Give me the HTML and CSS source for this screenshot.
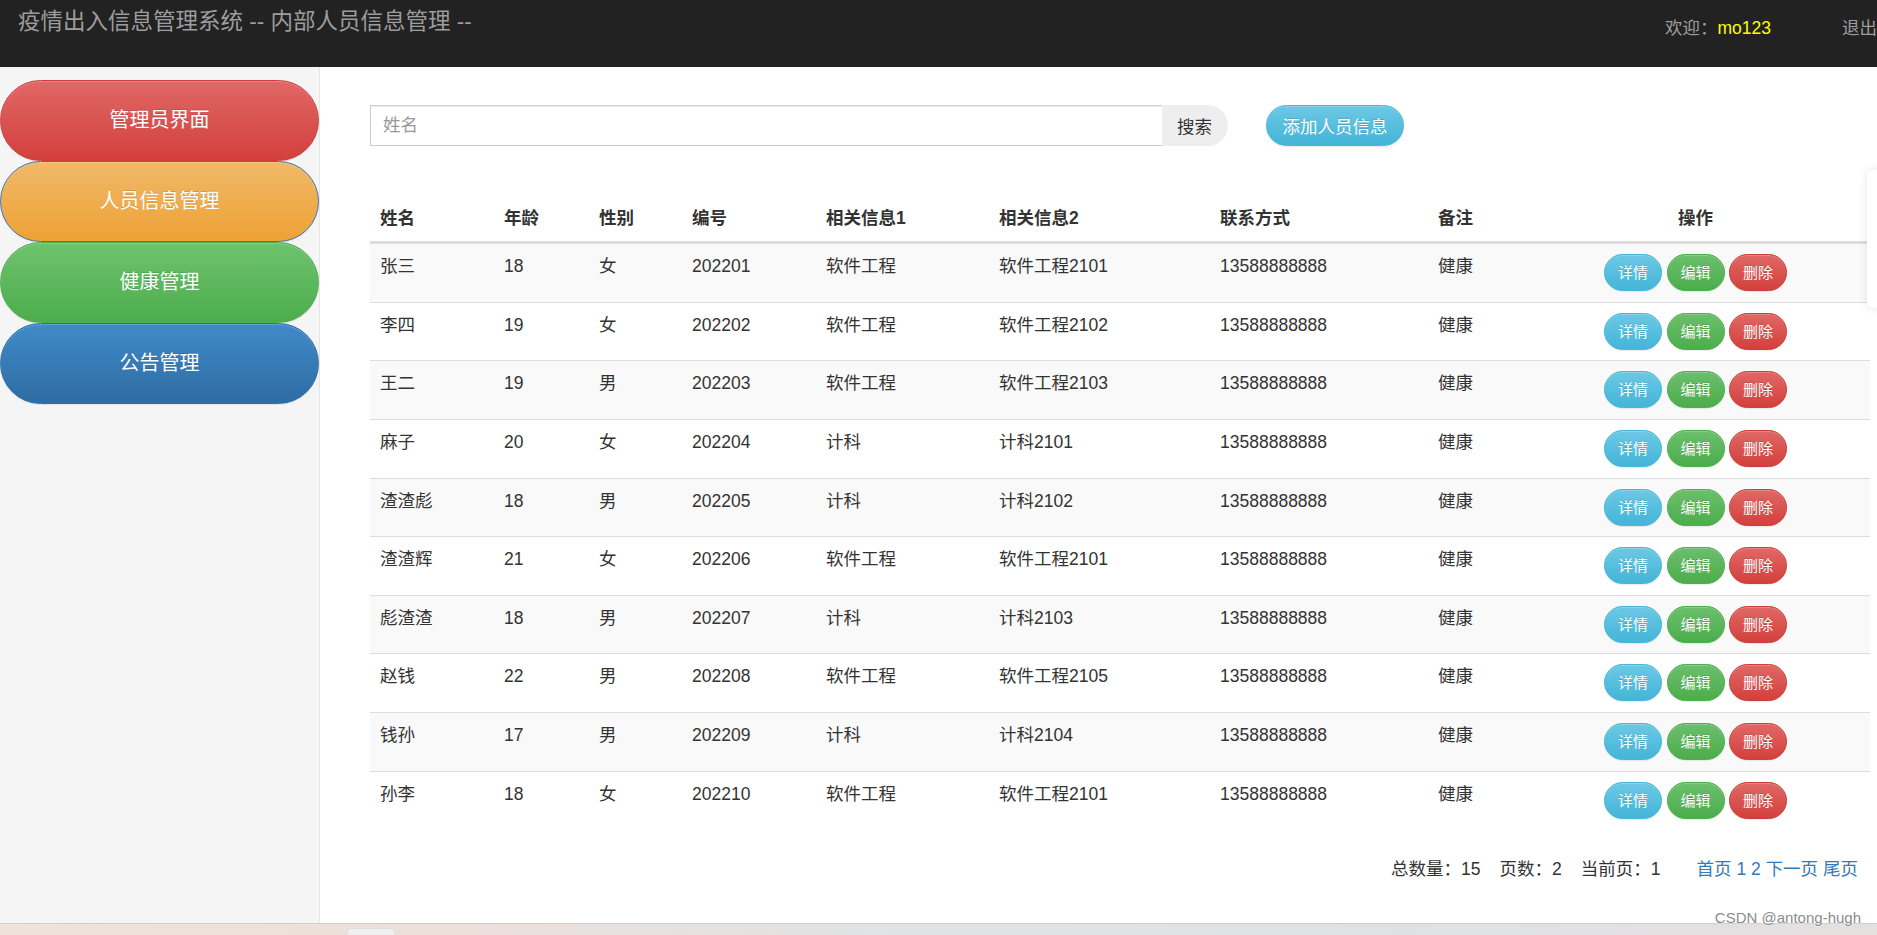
FILE: index.html
```html
<!DOCTYPE html>
<html lang="zh-CN">
<head>
<meta charset="utf-8">
<title>疫情出入信息管理系统</title>
<link rel="stylesheet" href="styles.css">
</head>
<body>
<header class="topbar">
  <div class="brand">疫情出入信息管理系统 -- 内部人员信息管理 --</div>
  <nav class="user-nav">
    <span class="welcome">欢迎：<span class="uname">mo123</span></span>
    <a class="logout">退出</a>
  </nav>
</header>
<div class="layout">
  <aside class="sidebar">
    <a class="side-btn red">管理员界面</a>
    <a class="side-btn orange active">人员信息管理</a>
    <a class="side-btn green">健康管理</a>
    <a class="side-btn blue">公告管理</a>
  </aside>
  <main class="main">
    <div class="toolbar">
      <div class="search-group">
        <input class="search-input" type="text" placeholder="姓名">
        <button class="search-btn">搜索</button>
      </div>
      <button class="add-btn">添加人员信息</button>
    </div>
    <table class="data-table">
      <colgroup>
        <col class="c1"><col class="c2"><col class="c3"><col class="c4"><col class="c5"><col class="c6"><col class="c7"><col class="c8"><col class="c9">
      </colgroup>
      <thead>
        <tr><th>姓名</th><th>年龄</th><th>性别</th><th>编号</th><th>相关信息1</th><th>相关信息2</th><th>联系方式</th><th>备注</th><th class="ops-h">操作</th></tr>
      </thead>
      <tbody>
        <tr><td>张三</td><td>18</td><td>女</td><td>202201</td><td>软件工程</td><td>软件工程2101</td><td>13588888888</td><td>健康</td><td class="ops"><div class="ops-wrap"><a class="sbtn info">详情</a><a class="sbtn success">编辑</a><a class="sbtn danger">删除</a></div></td></tr>
        <tr><td>李四</td><td>19</td><td>女</td><td>202202</td><td>软件工程</td><td>软件工程2102</td><td>13588888888</td><td>健康</td><td class="ops"><div class="ops-wrap"><a class="sbtn info">详情</a><a class="sbtn success">编辑</a><a class="sbtn danger">删除</a></div></td></tr>
        <tr><td>王二</td><td>19</td><td>男</td><td>202203</td><td>软件工程</td><td>软件工程2103</td><td>13588888888</td><td>健康</td><td class="ops"><div class="ops-wrap"><a class="sbtn info">详情</a><a class="sbtn success">编辑</a><a class="sbtn danger">删除</a></div></td></tr>
        <tr><td>麻子</td><td>20</td><td>女</td><td>202204</td><td>计科</td><td>计科2101</td><td>13588888888</td><td>健康</td><td class="ops"><div class="ops-wrap"><a class="sbtn info">详情</a><a class="sbtn success">编辑</a><a class="sbtn danger">删除</a></div></td></tr>
        <tr><td>渣渣彪</td><td>18</td><td>男</td><td>202205</td><td>计科</td><td>计科2102</td><td>13588888888</td><td>健康</td><td class="ops"><div class="ops-wrap"><a class="sbtn info">详情</a><a class="sbtn success">编辑</a><a class="sbtn danger">删除</a></div></td></tr>
        <tr><td>渣渣辉</td><td>21</td><td>女</td><td>202206</td><td>软件工程</td><td>软件工程2101</td><td>13588888888</td><td>健康</td><td class="ops"><div class="ops-wrap"><a class="sbtn info">详情</a><a class="sbtn success">编辑</a><a class="sbtn danger">删除</a></div></td></tr>
        <tr><td>彪渣渣</td><td>18</td><td>男</td><td>202207</td><td>计科</td><td>计科2103</td><td>13588888888</td><td>健康</td><td class="ops"><div class="ops-wrap"><a class="sbtn info">详情</a><a class="sbtn success">编辑</a><a class="sbtn danger">删除</a></div></td></tr>
        <tr><td>赵钱</td><td>22</td><td>男</td><td>202208</td><td>软件工程</td><td>软件工程2105</td><td>13588888888</td><td>健康</td><td class="ops"><div class="ops-wrap"><a class="sbtn info">详情</a><a class="sbtn success">编辑</a><a class="sbtn danger">删除</a></div></td></tr>
        <tr><td>钱孙</td><td>17</td><td>男</td><td>202209</td><td>计科</td><td>计科2104</td><td>13588888888</td><td>健康</td><td class="ops"><div class="ops-wrap"><a class="sbtn info">详情</a><a class="sbtn success">编辑</a><a class="sbtn danger">删除</a></div></td></tr>
        <tr><td>孙李</td><td>18</td><td>女</td><td>202210</td><td>软件工程</td><td>软件工程2101</td><td>13588888888</td><td>健康</td><td class="ops"><div class="ops-wrap"><a class="sbtn info">详情</a><a class="sbtn success">编辑</a><a class="sbtn danger">删除</a></div></td></tr>
      </tbody>
    </table>
    <div class="pager">
      <span class="pinfo">总数量：15</span>
      <span class="pinfo">页数：2</span>
      <span class="pinfo">当前页：1</span>
      <span class="plinks"><a>首页</a> <a>1</a> <a>2</a> <a>下一页</a> <a>尾页</a></span>
    </div>
  </main>
</div>
<div class="taskbar"><div class="tab"></div></div>
<div class="edge-card"></div>
<div class="watermark">CSDN @antong-hugh</div>
</body>
</html>
```

FILE: styles.css
```css
* { box-sizing: border-box; }
html, body { margin: 0; padding: 0; }
body {
  width: 1877px;
  height: 935px;
  overflow: hidden;
  position: relative;
  font-family: "Liberation Sans", Arial, "Noto Sans CJK SC", sans-serif;
  font-size: 17.5px;
  line-height: 25px;
  color: #333;
  background: #fff;
}
a { text-decoration: none; cursor: pointer; }

.topbar {
  height: 67px;
  background: #222;
  display: flex;
  align-items: flex-start;
  overflow: hidden;
}
.brand {
  color: #9d9d9d;
  font-size: 22.5px;
  line-height: 28px;
  padding: 8px 0 0 18px;
}
.user-nav {
  margin-left: auto;
  margin-right: 0;
  display: flex;
  align-items: flex-start;
  padding-top: 16px;
  color: #9d9d9d;
  font-size: 17.5px;
  line-height: 25px;
}
.welcome { color: #9d9d9d; }
.uname { color: #ffff00; }
.logout { color: #9d9d9d; margin-left: 71px; white-space: nowrap; }

.layout {
  display: flex;
  height: 856px;
}
.sidebar {
  width: 320px;
  flex: none;
  background: #f5f5f5;
  border-right: 1px solid #e6e6e6;
  padding-top: 13px;
  display: flex;
  flex-direction: column;
}
.side-btn {
  display: flex;
  align-items: center;
  justify-content: center;
  height: 81px;
  width: 319px;
  border-radius: 41px;
  border: 1px solid;
  color: #fff;
  font-size: 20px;
  text-shadow: 0 -1px 0 rgba(0,0,0,.15);
  box-shadow: inset 0 1px 0 rgba(255,255,255,.2), 0 1px 1px rgba(0,0,0,.08);
}
.side-btn.red { background: linear-gradient(#e06866, #d3403c); border-color: #c9403b; }
.side-btn.orange { background: linear-gradient(#f1b868, #eea236); border-color: #3a76b0; }
.side-btn.green { background: linear-gradient(#6ec36e, #4cad4c); border-color: #4cae4c; }
.side-btn.blue { background: linear-gradient(#408ac9, #2e6ca3); border-color: #2e6da4; }

.main {
  flex: 1;
  padding: 38px 7px 0 50px;
}
.toolbar {
  display: flex;
  align-items: center;
  height: 41px;
  margin-bottom: 50px;
}
.search-group {
  display: flex;
  width: 858px;
  height: 41px;
}
.search-input {
  flex: 1;
  height: 41px;
  border: 1px solid #ccc;
  border-right: none;
  border-radius: 0;
  padding: 0 12px;
  font-family: inherit;
  font-size: 17.5px;
  color: #555;
  box-shadow: inset 0 1px 1px rgba(0,0,0,.075);
  outline: none;
}
.search-input::placeholder { color: #999; }
.search-btn {
  width: 66px;
  height: 41px;
  border: none;
  background: #eeeeee;
  border-radius: 0 21px 21px 0;
  font-family: inherit;
  font-size: 17.5px;
  color: #333;
  text-align: left;
  padding: 0 0 0 15px;
}
.add-btn {
  margin-left: 38px;
  width: 138px;
  height: 41px;
  border: 1px solid #46b8da;
  border-radius: 21px;
  background: linear-gradient(#6cc8e5, #44b5d8);
  color: #fff;
  font-family: inherit;
  font-size: 17.5px;
  text-shadow: 0 -1px 0 rgba(0,0,0,.15);
  box-shadow: inset 0 1px 0 rgba(255,255,255,.2), 0 1px 2px rgba(0,0,0,.1);
  padding: 0;
}

.data-table {
  width: 1500px;
  border-collapse: collapse;
  table-layout: fixed;
}
.c1 { width: 124px; } .c2 { width: 95px; } .c3 { width: 93px; } .c4 { width: 134px; }
.c5 { width: 173px; } .c6 { width: 221px; } .c7 { width: 218px; } .c8 { width: 93px; } .c9 { width: 349px; }
.data-table th {
  text-align: left;
  font-weight: bold;
  padding: 10px;
  line-height: 25px;
  border-bottom: 3px solid #ddd;
  vertical-align: bottom;
}
.data-table th.ops-h { text-align: center; }
.data-table td {
  padding: 10px 10px 10.65px;
  line-height: 25px;
  vertical-align: top;
  border-top: 1px solid #ddd;
}
.data-table tbody tr:first-child td { border-top: none; }
.data-table tbody tr:nth-child(odd) { background: #f9f9f9; }
.ops-wrap {
  display: flex;
  justify-content: center;
  gap: 4.5px;
}
.sbtn {
  display: inline-flex;
  align-items: center;
  justify-content: center;
  width: 58px;
  height: 37px;
  border-radius: 19px;
  border: 1px solid;
  color: #fff;
  font-size: 15px;
  text-shadow: 0 -1px 0 rgba(0,0,0,.15);
  box-shadow: inset 0 1px 0 rgba(255,255,255,.2), 0 1px 1px rgba(0,0,0,.08);
}
.sbtn.info { background: linear-gradient(#6cc8e5, #44b5d8); border-color: #46b8da; }
.sbtn.success { background: linear-gradient(#6cbf6c, #4cad4c); border-color: #4cae4c; }
.sbtn.danger { background: linear-gradient(#e06866, #d3403c); border-color: #c9403b; }

.pager {
  display: flex;
  justify-content: flex-end;
  align-items: center;
  margin-top: 28px;
  padding-right: 12px;
  line-height: 25px;
  color: #333;
}
.pinfo { margin-left: 19px; }
.plinks { margin-left: 36px; white-space: pre; }
.plinks a { color: #337ab7; }

.taskbar {
  position: absolute;
  left: 0; right: 0; bottom: 0;
  height: 12px;
  border-top: 1px solid #cfcfcf;
  background: linear-gradient(90deg, #efe2d8 0%, #ece0db 25%, #dfe3e5 50%, #dde2e4 70%, #e6dfe0 100%);
}
.tab {
  position: absolute;
  left: 347px;
  top: 4px;
  width: 48px;
  height: 10px;
  background: #f0f0f0;
  border: 1px solid #e0e0e0;
  border-radius: 4px 4px 0 0;
}
.edge-card {
  position: absolute;
  left: 1867px;
  top: 170px;
  width: 40px;
  height: 138px;
  background: #fff;
  border-radius: 6px;
  box-shadow: 0 0 10px rgba(0,0,0,.1);
}
.watermark {
  position: absolute;
  right: 16px;
  bottom: 8px;
  font-size: 15px;
  line-height: 18px;
  color: #8c8c8c;
  text-shadow: 0 0 2px #fff;
}
```
